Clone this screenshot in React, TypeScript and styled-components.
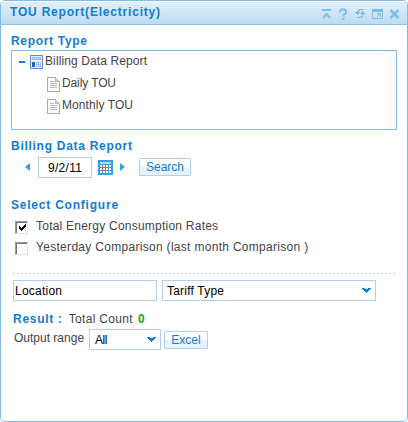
import React from 'react';
import styled, { createGlobalStyle } from 'styled-components';

const GlobalStyle = createGlobalStyle`
  *, *::before, *::after { box-sizing: border-box; }
  body { margin: 0; background: #fff; }
`;

const Panel = styled.main`
  width: 408px;
  height: 422px;
  display: flex;
  flex-direction: column;
  border: 1px solid #7fbce6;
  border-radius: 5px;
  overflow: hidden;
  background: #fff;
  color: #444;
  font: 12px/14px 'Liberation Sans', Arial, sans-serif;
`;

const Header = styled.header`
  height: 24px;
  flex: none;
  display: flex;
  justify-content: space-between;
  padding: 3px 7px 0 9px;
  background: linear-gradient(#e1effc, #bcdcf1);
  border-top: 1px solid #fff;
  border-bottom: 1px solid #93bdea;
`;

const Text = styled.span<{ $spacing?: number }>`
  white-space: pre;
  letter-spacing: ${p => p.$spacing ?? 0}px;
`;

const Strong = styled(Text)<{ $green?: boolean }>`
  font-weight: bold;
  color: ${p => (p.$green ? '#2aa01a' : '#107cd2')};
`;

const Heading = styled(Strong).attrs({ as: 'h2' })`
  margin: 0;
  font-size: 12px;
  height: 15px;
`;

const Tools = styled.div`
  display: flex;
  padding-top: 2px;
`;

const Body = styled.div`
  padding: 9px 10px 0;
`;

const Tree = styled.ul`
  height: 80px;
  width: 386px;
  margin: 1px 0 9px;
  padding: 0 0 0 7px;
  border: 1px solid #7fbce6;
  list-style: none;
`;

const TreeRow = styled.li<{ $child?: boolean }>`
  height: 22px;
  display: flex;
  align-items: center;
  gap: 2px;
  padding-left: ${p => (p.$child ? 28 : 0)}px;

  svg { margin-top: ${p => (p.$child ? 1 : 0)}px; }
  span { margin-top: -2px; }
`;

const Minus = styled.i`
  width: 6px;
  height: 2px;
  margin-right: 3px;
  background: #107cd2;
`;

const DateRow = styled.div`
  display: flex;
  align-items: center;
  height: 21px;
  margin: 3px 0 20px;
  padding-left: 14px;
`;

const Arrow = styled.svg<{ $flip?: boolean }>`
  width: 5px;
  height: 8px;
  margin-bottom: 2px;
  fill: #3a9edb;
  transform: ${p => (p.$flip ? 'scaleX(-1)' : 'none')};
`;

const Field = styled.div<{ $w: number; $pad: number }>`
  width: ${p => p.$w}px;
  height: 21px;
  display: flex;
  align-items: center;
  justify-content: space-between;
  padding: 0 4px 0 ${p => p.$pad}px;
  border: 1px solid #b1d0ee;
  background: #fff;
  color: #000;
`;

const DateField = styled(Field)`
  margin: 0 6px 0 8px;
`;

const Button = styled.button<{ $w: number }>`
  width: ${p => p.$w}px;
  height: 18px;
  padding: 0;
  border: 1px solid #b1d0ee;
  border-radius: 1px;
  background: linear-gradient(#fff 50%, #e4f3fe 50%);
  color: #107cd2;
  font: 12px/14px 'Liberation Sans', Arial, sans-serif;
`;

const SearchButton = styled(Button)`
  margin: 0 0 1px 14px;
`;

const Option = styled.label`
  display: flex;
  align-items: center;
  gap: 8px;
  height: 21px;
  padding-left: 4px;
`;

const Options = styled.div`
  margin-bottom: 16px;
  padding-top: 2px;
`;

const Box = styled.span`
  width: 13px;
  height: 13px;
  flex: none;
  display: block;
  margin-top: 3px;
  background: #fff;
  border: 1px solid;
  border-color: #999 #e3e3e3 #e3e3e3 #999;
  box-shadow: inset 1px 1px #777;

  svg { display: block; margin: 2px 0 0 3px; }
`;

const Divider = styled.div`
  width: 383px;
  height: 1px;
  margin: 0 0 6px 2px;
  background: repeating-linear-gradient(90deg, #b1d0ee 0 2px, transparent 2px 4px);
`;

const Filters = styled.div`
  display: flex;
  gap: 5px;
  padding-left: 2px;
`;

const ResultLine = styled.div`
  display: flex;
  height: 14px;
  margin: 11px 0 3px;
  padding-left: 2px;
`;

const Count = styled(Text)`
  margin: 0 5px 0 6px;
`;

const OutputRow = styled.div`
  display: flex;
  align-items: center;
  height: 21px;
  padding-left: 3px;
`;

const OutputLabel = styled(Text)`
  width: 75px;
  height: 18px;
`;

const ExcelButton = styled(Button)`
  margin: 1px 0 0 3px;
`;

const Chevron = () => (
  <svg width="9" height="5" shapeRendering="crispEdges" fill="#107cd2">
    <path d="M0 0h3v1h3V0h3v1H8v1H7v1H6v1H5v1H4V4H3V3H2V2H1V1H0z" />
  </svg>
);

const HeaderTools = () => (
  <svg width="78" height="13" fill="none" stroke="#7fbce6">
    <path d="M0 3h9M1 11l3.5-4L8 11" strokeWidth="2" />
    <path d="M18 5.5V4l1.5-1.5h3L24 4v2l-2.5 2v1.5M21.5 11v2" strokeWidth="2" />
    <path
      shapeRendering="crispEdges"
      d="M37 2.5h5M36 3.5h2M35 4.5h2M40 4.5h1M33 5.5h5M39 5.5h3M34 6.5h3M38 6.5h5M35 7.5h1M40 7.5h2M40 8.5h1M39 9.5h2M35 10.5h5"
    />
    <path d="M50.5 2.5h10v9h-10z" />
    <path d="M50 4h11" strokeWidth="2" />
    <path d="M55 6.5h3.5V10M55 10l3-3" />
    <path d="M68.5 3l8 8M76.5 3l-8 8" strokeWidth="2.5" />
  </svg>
);

const ReportIcon = () => (
  <svg width="13" height="14" shapeRendering="crispEdges">
    <path fill="#5c8dcc" d="M0 0h13v14H0z" />
    <path fill="#e8f2ff" d="M1 1h11v12H1z" />
    <path fill="#8ebdf0" d="M2 2h9v3H2z" />
    <path fill="#b9d8f8" d="M3 3h7v1H3z" />
    <path fill="#1e63b5" d="M2 7h3v5H2z" />
    <path fill="#9cc0ea" d="M6 7h5v5H6z" />
    <path fill="#fff" d="M7 8h1v1H7zM9 8h1v1H9zM7 10h1v1H7zM9 10h1v1H9z" />
  </svg>
);

const FileIcon = () => (
  <svg width="13" height="15" shapeRendering="crispEdges">
    <path fill="#fafafa" stroke="#aaa" d="M.5.5h8l4 4v10H.5z" />
    <path fill="#ccc" stroke="#bbb" d="M8.5.5v4h4" />
    <path stroke="#bbb" d="M3 4.5h4M3 6.5h7M3 8.5h7M3 10.5h7" />
  </svg>
);

const CalendarIcon = () => (
  <svg width="15" height="15" shapeRendering="crispEdges">
    <path fill="#3a9edb" d="M0 0h15v15H0z" />
    <path fill="#a9dcf7" d="M2 2h11v2H2z" />
    <path
      fill="#fff"
      d="M2 5h2v2H2zM5 5h2v2H5zM8 5h2v2H8zM11 5h2v2h-2zM2 8h2v2H2zM8 8h2v2H8zM11 8h2v2h-2zM2 11h2v2H2zM5 11h2v2H5zM8 11h2v2H8zM11 11h2v2h-2z"
    />
    <path fill="#fff" stroke="#f04a4a" d="M4.5 7.5h3v3h-3z" />
  </svg>
);

const CalendarSlot = styled.span`
  display: flex;
  margin-right: 7px;
`;

const DateArrow = ({ flip }: { flip?: boolean }) => (
  <Arrow $flip={flip} viewBox="0 0 5 8">
    <path d="M5 0v8L0 4z" />
  </Arrow>
);

const Check = ({ checked }: { checked?: boolean }) => (
  <Box>
    {checked && (
      <svg width="7" height="8" shapeRendering="crispEdges">
        <path d="M0 2h1v1h1v1h1V3h1V2h1V1h1V0h1v3H6v1H5v1H4v1H3v1H2V6H1V5H0z" />
      </svg>
    )}
  </Box>
);

export default function App() {
  return (
    <>
      <GlobalStyle />
      <Panel>
        <Header>
          <Strong $spacing={0.8}>TOU Report(Electricity)</Strong>
          <Tools><HeaderTools /></Tools>
        </Header>
        <Body>
          <Heading $spacing={0.69}>Report Type</Heading>
          <Tree>
            <TreeRow><Minus /><ReportIcon /><Text $spacing={0.11}>Billing Data Report</Text></TreeRow>
            <TreeRow $child><FileIcon /><Text $spacing={-0.11}>Daily TOU</Text></TreeRow>
            <TreeRow $child><FileIcon /><Text $spacing={0.07}>Monthly TOU</Text></TreeRow>
          </Tree>
          <Heading $spacing={0.72}>Billing Data Report</Heading>
          <DateRow>
            <DateArrow />
            <DateField $w={54} $pad={9}><Text $spacing={0.3}>9/2/11</Text></DateField>
            <CalendarSlot><CalendarIcon /></CalendarSlot>
            <DateArrow flip />
            <SearchButton $w={52}>Search</SearchButton>
          </DateRow>
          <Heading $spacing={0.78}>Select Configure</Heading>
          <Options>
            <Option><Check checked /><Text $spacing={0.23}>Total Energy Consumption Rates</Text></Option>
            <Option><Check /><Text $spacing={0.3}>Yesterday Comparison (last month Comparison )</Text></Option>
          </Options>
          <Divider />
          <Filters>
            <Field $w={144} $pad={1}><Text $spacing={0.23}>Location</Text></Field>
            <Field $w={214} $pad={4}><Text $spacing={0.21}>Tariff Type</Text><Chevron /></Field>
          </Filters>
          <ResultLine>
            <Strong $spacing={0.71}>Result :</Strong>
            <Count $spacing={0.33}>Total Count</Count>
            <Strong $green>0</Strong>
          </ResultLine>
          <OutputRow>
            <OutputLabel>Output range</OutputLabel>
            <Field $w={72} $pad={5}><Text $spacing={-0.5}>All</Text><Chevron /></Field>
            <ExcelButton $w={44}>Excel</ExcelButton>
          </OutputRow>
        </Body>
      </Panel>
    </>
  );
}
